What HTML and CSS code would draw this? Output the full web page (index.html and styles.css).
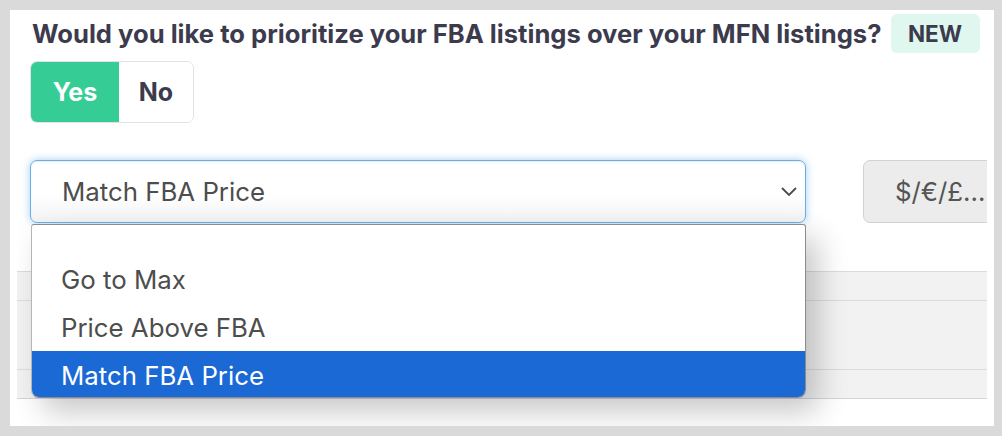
FILE: index.html
```html
<!DOCTYPE html>
<html lang="en">
<head>
<meta charset="utf-8">
<title>FBA priority</title>
<link rel="stylesheet" href="styles.css">
</head>
<body>
<div class="panel">
  <div class="inner">
    <div class="question">
      <h2 class="q-title">Would you like to prioritize your FBA listings over your MFN listings?</h2>
      <span class="badge">NEW</span>
    </div>
    <div class="toggle">
      <button class="tg tg-on">Yes</button>
      <button class="tg">No</button>
    </div>
    <div class="form-row">
      <div class="select-wrap">
        <div class="select">
          <span>Match FBA Price</span>
          <svg class="chev" width="16" height="9" viewBox="0 0 16 9"><path d="M1 1 L8 8 L15 1" fill="none" stroke="#4a4a4a" stroke-width="1.8"/></svg>
        </div>
        <ul class="dropdown">
          <li class="opt opt-blank"></li>
          <li class="opt">Go to Max</li>
          <li class="opt">Price Above FBA</li>
          <li class="opt opt-sel">Match FBA Price</li>
        </ul>
      </div>
      <button class="unit">$/€/£...</button>
    </div>
    <div class="table">
      <div class="trow trow-head"></div>
      <div class="trow trow-body"></div>
      <div class="trow trow-foot"></div>
    </div>
  </div>
</div>
</body>
</html>
```
FILE: styles.css
```css
* { box-sizing: border-box; }
html, body { margin: 0; padding: 0; }
body {
  background: #dadada;
  font-family: "Inter", "Noto Sans", sans-serif;
  width: 1002px;
  height: 436px;
  padding: 10px 8px 10px 10px;
  overflow: hidden;
}
.panel {
  background: #fff;
  height: 416px;
  padding: 0 7px;
}
.inner {
  height: 416px;
  overflow: hidden;
  position: relative;
}
.question {
  display: flex;
  align-items: center;
  margin-top: 4px;
  height: 39px;
  padding-left: 15px;
}
.q-title {
  margin: 0;
  font-size: 25.6px;
  font-weight: 700;
  color: #3b3b4d;
  white-space: nowrap;
}
.badge {
  margin-left: 9px;
  background: #e0f7ef;
  color: #3b3b4d;
  font-weight: 700;
  font-size: 22.5px;
  height: 39px;
  width: 89px;
  border-radius: 6px;
  display: flex;
  align-items: center;
  justify-content: center;
  flex: none;
}
.toggle {
  display: inline-flex;
  margin: 8px 0 0 13px;
  height: 62px;
  border: 1px solid #e3e3e3;
  border-radius: 7px;
  overflow: hidden;
}
.tg {
  font-family: inherit;
  font-size: 25px;
  font-weight: 700;
  border: 0;
  background: #fff;
  color: #3b3b4d;
  padding: 0;
  width: 74px;
}
.tg-on {
  background: #35cd95;
  color: #fff;
  width: 88px;
}
.form-row {
  display: flex;
  margin: 37px 0 0 13px;
  gap: 57px;
}
.select-wrap {
  position: relative;
  width: 776px;
  flex: none;
}
.select {
  height: 63px;
  border: 1px solid #66afe9;
  border-radius: 7px;
  background: linear-gradient(#fff 55%, #f3f3f3);
  box-shadow: inset 0 1px 1px rgba(0,0,0,.075), 0 0 8px rgba(102,175,233,.6);
  display: flex;
  align-items: center;
  justify-content: space-between;
  padding: 0 8px 0 31px;
  font-size: 25.8px;
  color: #4d4d4d;
}
.dropdown {
  position: absolute;
  left: 1px;
  top: 64px;
  width: 775px;
  height: 174px;
  margin: 0;
  padding: 0;
  list-style: none;
  background: #fff;
  border: 1px solid #8c8c8c;
  border-left-color: #b5b5b5;
  border-radius: 3px 3px 8px 8px;
  overflow: hidden;
  box-shadow: 12px 14px 30px rgba(0,0,0,.22);
  z-index: 5;
  font-size: 25.8px;
  color: #4d4d4d;
}
.opt {
  height: 48px;
  display: flex;
  align-items: center;
  padding-left: 29px;
}
.opt-blank { height: 30px; }
.opt-sel {
  background: #1a69d4;
  color: #fff;
}
.unit {
  font-family: inherit;
  font-size: 25.8px;
  color: #555;
  background: #ececec;
  border: 1px solid #d2d2d2;
  border-radius: 7px;
  height: 63px;
  width: 150px;
  padding: 0 0 0 31px;
  text-align: left;
  flex: none;
  white-space: nowrap;
}
.table {
  margin-top: 48px;
  background: #f2f2f2;
  border-top: 1px solid #dcdcdc;
}
.trow { border-bottom: 1px solid #dcdcdc; }
.trow-head { height: 29px; }
.trow-body { height: 69px; }
.trow-foot { height: 29px; border-bottom-color: #d6d3de; }
```
